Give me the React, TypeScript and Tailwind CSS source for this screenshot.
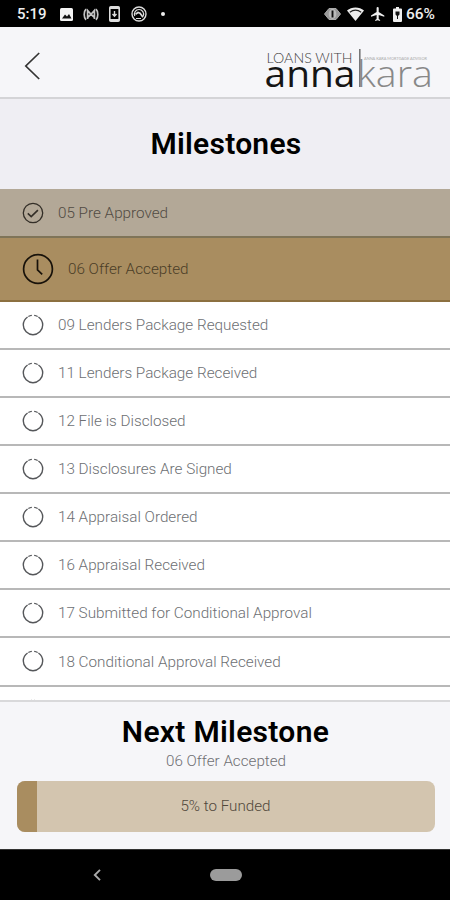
import { clsx } from "clsx";

type Status = "done" | "current" | "pending";

const milestones: { title: string; status: Status }[] = [
    { title: "05 Pre Approved", status: "done" },
    { title: "06 Offer Accepted", status: "current" },
    { title: "09 Lenders Package Requested", status: "pending" },
    { title: "11 Lenders Package Received", status: "pending" },
    { title: "12 File is Disclosed", status: "pending" },
    { title: "13 Disclosures Are Signed", status: "pending" },
    { title: "14 Appraisal Ordered", status: "pending" },
    { title: "16 Appraisal Received", status: "pending" },
    { title: "17 Submitted for Conditional Approval", status: "pending" },
    { title: "18 Conditional Approval Received", status: "pending" },
    { title: "", status: "pending" },
];

const progress = 5;

export default function App() {
    return (
        <div className="flex h-[900px] w-[450px] flex-col overflow-hidden bg-white font-['Roboto',sans-serif]">
            <StatusBar />
            <header className="flex h-[72px] shrink-0 items-center justify-between border-b-2 border-[#d4d4d7] bg-[#f6f6f9] pr-4 pl-6">
                <svg className="mt-2 h-7 w-4" viewBox="0 0 16 28" fill="none" stroke="#333" strokeWidth="1.7">
                    <path d="M15.2 1 1.8 14l13.4 13" />
                </svg>
                <Logo />
            </header>
            <div className="flex h-[89.5px] shrink-0 items-center justify-center bg-[#efeef3]">
                <h1 className="pl-0.5 text-[30px] leading-none font-semibold tracking-[0.25px] text-black">Milestones</h1>
            </div>
            <ul className="min-h-0 flex-1 overflow-hidden">
                {milestones.map((item) => (
                    <Milestone key={item.title} {...item} />
                ))}
            </ul>
            <footer className="flex h-[149px] shrink-0 flex-col items-center border-t-2 border-[#d9d9db] bg-[#f6f6f9] px-4">
                <h2 className="mt-3 pl-px text-[30px] leading-9 font-semibold tracking-[0.3px] text-black">Next Milestone</h2>
                <p className="mt-px pl-0.5 text-[15.2px] leading-5 font-light text-[#6f6f73]">06 Offer Accepted</p>
                <div className="mt-[10px] ml-px flex h-[51px] w-full overflow-hidden rounded-lg bg-[#d3c5af]">
                    <div className="bg-[#a98d60]" style={{ width: `${progress}%` }} />
                    <span className="-ml-[21px] flex-1 self-center text-center text-[15.2px] font-light text-[#51483b]">
                        {progress}% to Funded
                    </span>
                </div>
            </footer>
            <nav className="flex h-[51px] shrink-0 items-center border-t border-[#333] bg-black pl-[93px]">
                <svg className="h-3 w-2" viewBox="0 0 8 12" fill="none" stroke="#aaa" strokeWidth="1.9">
                    <path d="M7 .8 1.8 6 7 11.2" />
                </svg>
                <div className="ml-[109px] h-3 w-8 rounded-full bg-[#9b9b9b]" />
            </nav>
        </div>
    );
}

function Milestone({ title, status }: { title: string; status: Status }) {
    return (
        <li
            className={clsx(
                "flex items-center pl-[21.6px] text-[15.25px] font-light",
                status === "done" && "h-[49.5px] border-b-2 border-[#7f7458] bg-[#b3a897] pt-px text-[#514b43]",
                status === "current" && "h-[63.5px] border-b-2 border-[#8c7040] bg-[#a98d60] text-[#4b3d27]",
                status === "pending" && "h-[48.13px] border-b-2 border-[#b8b8b8] bg-white text-[#6d6f73]",
            )}
        >
            <StatusIcon status={status} />
            <span className="ml-[14.4px] pt-px">{title}</span>
        </li>
    );
}

function StatusIcon({ status }: { status: Status }) {
    if (status === "current") {
        return (
            <svg className="size-8" viewBox="0 0 32 32" fill="none" stroke="#18120a">
                <circle cx="16" cy="16" r="14.4" strokeWidth="1.7" />
                <path d="M15.5 6.5V17l4.7 4.3" strokeWidth="1.7" />
            </svg>
        );
    }

    if (status === "done") {
        return (
            <svg className="size-[22px]" viewBox="0 0 22 22" fill="none" stroke="#332e27">
                <circle cx="11" cy="11" r="9.7" strokeWidth="1.3" />
                <path d="m5.8 11.4 3.4 3.2 6.7-6.5" strokeWidth="1.6" />
            </svg>
        );
    }

    return (
        <svg className="size-[22px]" viewBox="0 0 22 22" fill="none" stroke="#55575a" strokeWidth="1.4">
            <circle cx="11" cy="11" r="9.7" pathLength="100" strokeDasharray="0 2 6 1.5 81 1.5 6 2" transform="rotate(-90 11 11)" />
        </svg>
    );
}

function Logo() {
    return (
        <svg className="mt-2 h-12 w-[170px] overflow-visible" viewBox="0 0 170 48" fontFamily="Open Sans, sans-serif">
            <text x="2.5" y="20.5" fontFamily="Lato, sans-serif" fontSize="14" fontWeight="300" fill="#444" textLength="86" lengthAdjust="spacingAndGlyphs">LOANS WITH</text>
            <text x="0.5" y="45" fontSize="37" fontWeight="400" fill="#151515" textLength="91" lengthAdjust="spacingAndGlyphs">anna</text>
            <path d="M95.8 7v38" stroke="#777" strokeWidth="1.6" />
            <text x="92.8" y="45" fontSize="37" fontWeight="300" fill="#888" textLength="76" lengthAdjust="spacingAndGlyphs">kara</text>
            <text x="100" y="18" fontFamily="Lato, sans-serif" fontSize="4" fill="#aaa" textLength="63" lengthAdjust="spacingAndGlyphs">ANNA KARA MORTGAGE ADVISOR</text>
        </svg>
    );
}

function StatusBar() {
    return (
        <div className="flex h-[27px] shrink-0 items-center bg-black pt-px pl-[17px] text-[15px] leading-none font-medium text-[#eee]">
            <span className="w-[30px]">5:19</span>
            <svg className="ml-[13px] size-[13px]" viewBox="0 0 13 13">
                <rect width="13" height="13" rx="1.5" fill="#f4f4f4" />
                <path d="m2 10.5 3-4 2 2 2-2.5 2.5 4.5z" fill="#111" />
            </svg>
            <svg className="ml-[10px] h-[13px] w-4" viewBox="0 0 16 13" fill="none" stroke="#c4c4c4" strokeWidth="1.7">
                <path d="M3 1.2C.6 3.5.6 9.5 3 11.8M13 1.2c2.4 2.3 2.4 8.3 0 10.6M4.6 11V2.5L8 6.3l3.4-3.8V11M5 9l3-2.7L11 9" />
            </svg>
            <svg className="ml-[10px] h-4 w-[11px]" viewBox="0 0 11 16" fill="none">
                <rect x=".8" y=".8" width="9.4" height="14.4" rx="1" stroke="#ddd" strokeWidth="1.6" />
                <path d="M1 2h9M1 14h9" stroke="#ddd" strokeWidth="2.2" />
                <path d="M5.5 5v5M3.5 8l2 2.2 2-2.2" stroke="#ddd" strokeWidth="1.4" />
            </svg>
            <svg className="ml-[11px] size-4" viewBox="0 0 16 16" fill="none" stroke="#ddd">
                <circle cx="8" cy="8" r="7" strokeWidth="1.4" />
                <path d="M3.8 10a4.6 4.6 0 1 1 8.4 0M5 12.5h5" strokeWidth="1.2" />
                <path d="m4.5 8.2 2.5-1.7 2 .8 3 4" strokeWidth="1.7" />
            </svg>
            <span className="ml-[14px] size-1 rounded-full bg-[#eee]" />
            <svg className="ml-[159px] h-3 w-[17px]" viewBox="0 0 17 12">
                <path d="M5 .5h7L16.5 6 12 11.5H5L.5 6z" fill="#999" stroke="#aaa" />
                <ellipse cx="8.5" cy="6" rx="3.8" ry="5" fill="#bbb" />
                <path d="M8.5 2.5v7" stroke="#111" strokeWidth="1.9" />
            </svg>
            <svg className="ml-[6px] h-[14px] w-[17px]" viewBox="0 0 17 14">
                <path d="M0 3.6a13 13 0 0 1 17 0L8.5 14z" fill="#eee" />
                <path d="M2.8 5.2a10 10 0 0 1 11.4 0" fill="none" stroke="#222" strokeWidth="1.2" />
            </svg>
            <svg className="ml-[7px] size-[14px]" viewBox="2 2 20 20" fill="#eee">
                <path d="M21 16v-2l-8-5V3.5a1.5 1.5 0 0 0-3 0V9l-8 5v2l8-2.5V19l-2 1.5V22l3.5-1 3.5 1v-1.5L13 19v-5.5z" />
            </svg>
            <svg className="ml-[8px] h-[15px] w-[9px]" viewBox="0 0 9 15">
                <path d="M3 0h3v1.5h2a1 1 0 0 1 1 1V14a1 1 0 0 1-1 1H1a1 1 0 0 1-1-1V2.5a1 1 0 0 1 1-1h2z" fill="#eee" />
                <path d="M2.5 4.5h4v3L5 9H4L2.5 7.5zM4 9h1v3H4z" fill="#111" />
            </svg>
            <span className="ml-[4px] pt-px text-[15.5px]">66%</span>
        </div>
    );
}
